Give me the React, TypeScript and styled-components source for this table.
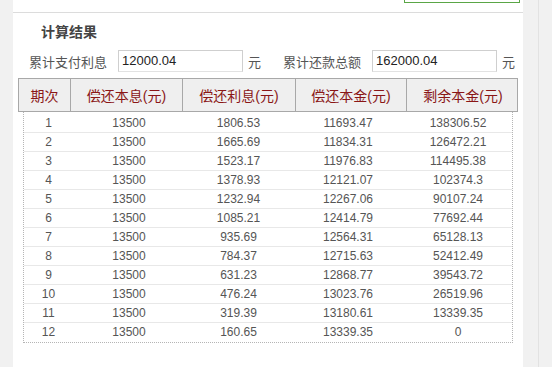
import React from "react";
import styled, { createGlobalStyle } from "styled-components";

const Global = createGlobalStyle`
  html, body { margin: 0; padding: 0; background: #f1f1f1; }
  body { font-family: "Liberation Sans", "Noto Sans CJK SC", sans-serif; }
`;

const Page = styled.div`
  display: flex;
  width: 552px;
  height: 367px;
  overflow: hidden;
  background: #f1f1f1;
`;

const LeftStrip = styled.div`
  width: 13px;
  flex: none;
  background: #f1f1f1;
`;

const Panel = styled.div`
  width: 510px;
  flex: none;
  background: #ffffff;
  display: flex;
  flex-direction: column;
`;

const RightStrip = styled.div`
  flex: 1;
  background: #f1f1f1;
  display: flex;
  padding-left: 15px;
`;

const ScrollLine = styled.div`
  width: 1px;
  background: #e2e2e2;
`;

const TopBar = styled.div`
  height: 12px;
  border-bottom: 1px solid #dcdcdc;
  display: flex;
  justify-content: flex-end;
  align-items: flex-start;
  padding-right: 3px;
`;

const GreenButton = styled.div`
  width: 114px;
  height: 2px;
  border: 1px solid #5aa646;
  border-top: none;
  background: #ffffff;
`;

const Title = styled.div`
  margin: 8px 0 0 28px;
  font-size: 14px;
  line-height: 20px;
  font-weight: bold;
  color: #444;
  font-family: "Noto Sans CJK SC", sans-serif;
`;

const SummaryRow = styled.div`
  display: flex;
  align-items: center;
  margin: 9px 0 0 16px;
  height: 22px;
`;

const Label = styled.span<{ $gapBefore?: number }>`
  font-family: "Noto Sans CJK SC", sans-serif;
  font-size: 13px;
  color: #555;
  margin-left: ${(p) => p.$gapBefore ?? 0}px;
`;

const ValueBox = styled.div`
  box-sizing: border-box;
  width: 125px;
  height: 22px;
  margin: 0 5px 0 11px;
  border: 1px solid #cfcfcf;
  border-bottom-color: #e2e2e2;
  font-size: 13px;
  line-height: 20px;
  padding-left: 3px;
  color: #222;
`;

const Unit = styled.span`
  font-family: "Noto Sans CJK SC", sans-serif;
  font-size: 13px;
  color: #555;
`;

const TableWrap = styled.div`
  margin: 6px 0 0 5px;
  width: 500px;
`;

const HeaderRow = styled.div`
  display: grid;
  grid-template-columns: 51px 112px 113px 111px 113px;
  box-sizing: border-box;
  height: 34px;
  border: 1px solid #a8a8a8;
  background: #efefef;
`;

const HeadCell = styled.div<{ $first?: boolean }>`
  display: flex;
  align-items: center;
  justify-content: center;
  border-left: ${(p) => (p.$first ? "none" : "1px solid #a8a8a8")};
  font-family: "Liberation Sans", "Noto Sans CJK SC", sans-serif;
  font-size: 14px;
  color: #8a1616;
`;

const Body = styled.div`
  margin: 0 5px;
  padding-top: 2px;
  border: 1px dotted #b5b5b5;
  border-top: none;
`;

const Row = styled.div`
  display: grid;
  grid-template-columns: 49px 112px 107px 112px 108px;
  height: 19px;
  box-sizing: border-box;
  border-bottom: 1px solid #e8e8e8;
  &:last-child {
    border-bottom: none;
  }
`;

const Cell = styled.div`
  text-align: center;
  font-size: 12px;
  line-height: 19px;
  color: #555;
`;

const headers = ["期次", "偿还本息(元)", "偿还利息(元)", "偿还本金(元)", "剩余本金(元)"];

const rows: string[][] = [
  ["1", "13500", "1806.53", "11693.47", "138306.52"],
  ["2", "13500", "1665.69", "11834.31", "126472.21"],
  ["3", "13500", "1523.17", "11976.83", "114495.38"],
  ["4", "13500", "1378.93", "12121.07", "102374.3"],
  ["5", "13500", "1232.94", "12267.06", "90107.24"],
  ["6", "13500", "1085.21", "12414.79", "77692.44"],
  ["7", "13500", "935.69", "12564.31", "65128.13"],
  ["8", "13500", "784.37", "12715.63", "52412.49"],
  ["9", "13500", "631.23", "12868.77", "39543.72"],
  ["10", "13500", "476.24", "13023.76", "26519.96"],
  ["11", "13500", "319.39", "13180.61", "13339.35"],
  ["12", "13500", "160.65", "13339.35", "0"],
];

export default function App() {
  return (
    <>
      <Global />
      <Page>
        <LeftStrip />
        <Panel>
          <TopBar>
            <GreenButton />
          </TopBar>
          <Title>计算结果</Title>
          <SummaryRow>
            <Label>累计支付利息</Label>
            <ValueBox>12000.04</ValueBox>
            <Unit>元</Unit>
            <Label $gapBefore={22}>累计还款总额</Label>
            <ValueBox>162000.04</ValueBox>
            <Unit>元</Unit>
          </SummaryRow>
          <TableWrap>
            <HeaderRow>
              {headers.map((h, i) => (
                <HeadCell key={h} $first={i === 0}>
                  {h}
                </HeadCell>
              ))}
            </HeaderRow>
            <Body>
              {rows.map((r) => (
                <Row key={r[0]}>
                  {r.map((c, i) => (
                    <Cell key={i}>{c}</Cell>
                  ))}
                </Row>
              ))}
            </Body>
          </TableWrap>
        </Panel>
        <RightStrip>
          <ScrollLine />
        </RightStrip>
      </Page>
    </>
  );
}
